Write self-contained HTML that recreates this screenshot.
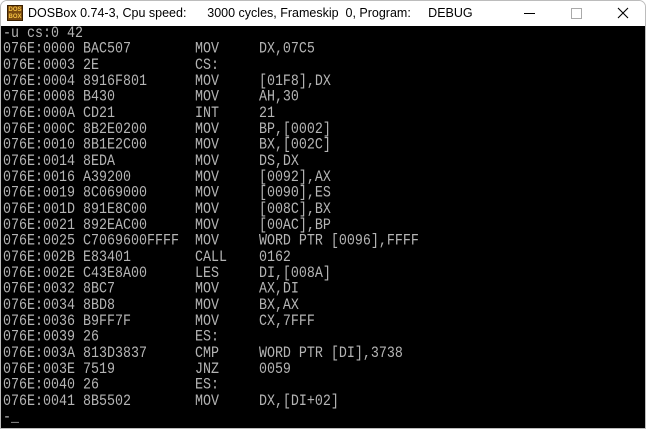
<!DOCTYPE html>
<html><head><meta charset="utf-8"><style>
html,body{margin:0;padding:0;background:#fff;width:646px;height:429px;overflow:hidden}
.win{position:absolute;left:0;top:0;width:644px;height:427px;border:1px solid #bcbcbc;border-radius:7px 7px 0 0;background:#fff;overflow:hidden}
.title{position:absolute;left:0;top:0;width:644px;height:25px;background:#fff;font-family:"Liberation Sans",sans-serif;font-size:12.5px;color:#000}
.title .t{position:absolute;left:27px;top:5px;white-space:pre}
.icon{position:absolute;left:6px;top:4px;width:16px;height:16px;background:#7a4a10;border:1px solid #3a2000;box-sizing:border-box;font:bold 6px "Liberation Sans",sans-serif;color:#f5c242;line-height:7px;text-align:center;padding-top:1px}
.term{position:absolute;left:0;top:25px;width:644px;height:402px;background:#000;overflow:hidden}
pre{margin:0;position:absolute;left:2px;top:0;font-family:"Liberation Mono",monospace;font-size:13.33px;line-height:13.333px;color:#b4b4b4;transform:scaleY(1.2);transform-origin:0 0}
.min{position:absolute;left:523px;top:12px;width:11px;height:1px;background:#000}
.max{position:absolute;left:570px;top:7px;width:9px;height:9px;border:1px solid #aaa}
</style></head><body>
<div class="win">
<div class="title"><div class="icon">DOS<br>BOX</div><div class="t">DOSBox 0.74-3, Cpu speed:      3000 cycles, Frameskip  0, Program:     DEBUG</div>
<div class="min"></div><div class="max"></div>
<svg style="position:absolute;left:616px;top:6px" width="12" height="12"><path d="M1 1L11 11M11 1L1 11" stroke="#000" stroke-width="1.1"/></svg>
</div>
<div class="term"><pre>-u cs:0 42
076E:0000 BAC507        MOV     DX,07C5
076E:0003 2E            CS:
076E:0004 8916F801      MOV     [01F8],DX
076E:0008 B430          MOV     AH,30
076E:000A CD21          INT     21
076E:000C 8B2E0200      MOV     BP,[0002]
076E:0010 8B1E2C00      MOV     BX,[002C]
076E:0014 8EDA          MOV     DS,DX
076E:0016 A39200        MOV     [0092],AX
076E:0019 8C069000      MOV     [0090],ES
076E:001D 891E8C00      MOV     [008C],BX
076E:0021 892EAC00      MOV     [00AC],BP
076E:0025 C7069600FFFF  MOV     WORD PTR [0096],FFFF
076E:002B E83401        CALL    0162
076E:002E C43E8A00      LES     DI,[008A]
076E:0032 8BC7          MOV     AX,DI
076E:0034 8BD8          MOV     BX,AX
076E:0036 B9FF7F        MOV     CX,7FFF
076E:0039 26            ES:
076E:003A 813D3837      CMP     WORD PTR [DI],3738
076E:003E 7519          JNZ     0059
076E:0040 26            ES:
076E:0041 8B5502        MOV     DX,[DI+02]
-_</pre></div>
</div>
</body></html>
